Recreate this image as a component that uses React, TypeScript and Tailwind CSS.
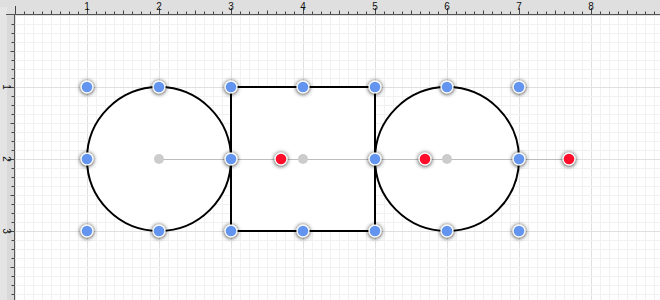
import React from "react";

const U = 72;
const S = 9;

function TopRuler() {
  const ticks: React.ReactNode[] = [];
  for (let i = 0; i * S <= 645; i++) {
    const x = 15 + i * S + 0.5;
    const len = i % 8 === 0 ? 6 : i % 4 === 0 ? 3.5 : 2.5;
    ticks.push(<line key={i} x1={x} x2={x} y1={14 - len} y2={14} stroke="#444" strokeWidth={1} />);
  }
  const nums: React.ReactNode[] = [];
  for (let k = 1; k <= 8; k++) {
    nums.push(
      <text key={k} x={15 + k * U} y={9.5} fontSize={10} textAnchor="middle" fontFamily="'Liberation Sans', Arial, sans-serif" fill="#111">
        {k}
      </text>
    );
  }
  return (
    <svg width={660} height={15} className="block">
      <rect x={0} y={0} width={660} height={15} fill="#dfdfdf" />
      <rect x={0} y={7} width={7} height={8} fill="#e6e6e6" />
      <line x1={15.5} x2={15.5} y1={6} y2={14} stroke="#444" />
      {ticks}
      {nums}
      <line x1={6} x2={660} y1={14.5} y2={14.5} stroke="#555" strokeWidth={1} />
    </svg>
  );
}

function LeftRuler() {
  const ticks: React.ReactNode[] = [];
  for (let i = 1; i * S <= 285; i++) {
    const y = i * S + 0.5;
    const len = i % 8 === 0 ? 6 : i % 4 === 0 ? 3.5 : 2.5;
    ticks.push(<line key={i} y1={y} y2={y} x1={14 - len} x2={14} stroke="#444" strokeWidth={1} />);
  }
  const nums: React.ReactNode[] = [];
  for (let k = 1; k <= 3; k++) {
    const y = k * U;
    nums.push(
      <text key={k} x={0} y={0} fontSize={10} textAnchor="middle" fontFamily="'Liberation Sans', Arial, sans-serif" fill="#111" transform={`translate(2.5 ${y}) rotate(90)`}>
        {k}
      </text>
    );
  }
  return (
    <svg width={15} height={285} className="block">
      <rect x={0} y={0} width={15} height={285} fill="#d9d9d9" />
      <rect x={0} y={0} width={7} height={285} fill="#e4e4e4" />
      {ticks}
      {nums}
      <line x1={14.5} x2={14.5} y1={0} y2={285} stroke="#555" strokeWidth={1} />
    </svg>
  );
}

const BLUE = "#6495f0";
const RED = "#ff0a2a";

function Handle({ x, y, c }: { x: number; y: number; c: string }) {
  return (
    <g filter="url(#hs)">
      <circle cx={x} cy={y} r={6.5} fill="#fff" />
      <circle cx={x} cy={y} r={5.3} fill={c} />
    </g>
  );
}

function Canvas() {
  const minor: React.ReactNode[] = [];
  for (let i = 0; i * S <= 645; i++) {
    const x = i * S + 0.5;
    minor.push(<line key={"v" + i} x1={x} x2={x} y1={0} y2={285} stroke={i % 8 === 0 ? "#e0e0e0" : "#f1f1f1"} />);
  }
  for (let i = 0; i * S <= 285; i++) {
    const y = i * S + 0.5;
    minor.push(<line key={"h" + i} y1={y} y2={y} x1={0} x2={645} stroke={i % 8 === 0 ? "#e0e0e0" : "#f1f1f1"} />);
  }
  const o = -15;
  const P = (v: number) => v + o;
  const blue: [number, number][] = [
    [87, 87], [159, 87], [231, 87], [87, 159], [231, 159], [87, 231], [159, 231], [231, 231],
    [303, 87], [375, 87], [375, 159], [303, 231], [375, 231],
    [447, 87], [519, 87], [519, 159], [447, 231], [519, 231],
  ];
  const red: [number, number][] = [[281, 159], [425, 159], [569, 159]];
  const gray: [number, number][] = [[159, 159], [303, 159], [447, 159]];
  return (
    <svg width={645} height={285} className="block">
      <defs>
        <filter id="hs" x="-80%" y="-80%" width="260%" height="260%">
          <feDropShadow dx={0} dy={0.5} stdDeviation={2} floodColor="#000" floodOpacity={0.95} />
        </filter>
      </defs>
      <rect x={0} y={0} width={645} height={285} fill="#fff" />
      {minor}
      <circle cx={P(159)} cy={P(159)} r={72} fill="#fff" stroke="#000" strokeWidth={2} />
      <rect x={P(231)} y={P(87)} width={144} height={144} fill="#fff" stroke="#000" strokeWidth={2} />
      <circle cx={P(447)} cy={P(159)} r={72} fill="#fff" stroke="#000" strokeWidth={2} />
      <line x1={P(159)} x2={P(569)} y1={P(159) + 0.5} y2={P(159) + 0.5} stroke="#bdbdbd" strokeWidth={1} />
      {gray.map(([x, y], i) => (
        <circle key={"g" + i} cx={P(x)} cy={P(y)} r={5} fill="#cccccc" />
      ))}
      {blue.map(([x, y], i) => (
        <Handle key={"b" + i} x={P(x)} y={P(y)} c={BLUE} />
      ))}
      {red.map(([x, y], i) => (
        <Handle key={"r" + i} x={P(x)} y={P(y)} c={RED} />
      ))}
    </svg>
  );
}

export default function App() {
  return (
    <div className="w-[660px] h-[300px] flex flex-col overflow-hidden bg-white">
      <div className="h-[15px] flex">
        <TopRuler />
      </div>
      <div className="flex flex-1">
        <div className="w-[15px]">
          <LeftRuler />
        </div>
        <div className="flex-1">
          <Canvas />
        </div>
      </div>
    </div>
  );
}
